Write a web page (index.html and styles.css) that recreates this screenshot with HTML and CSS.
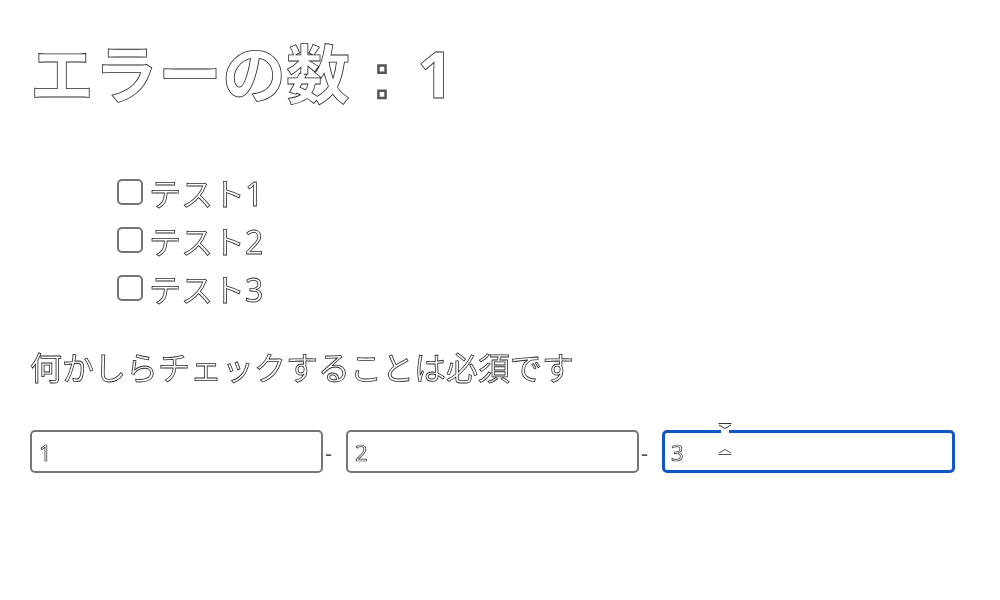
FILE: index.html
```html
<!DOCTYPE html>
<html lang="ja">
<head>
<meta charset="utf-8">
<title>エラーの数</title>
<link rel="stylesheet" href="styles.css">
</head>
<body>
<main class="page">
  <h1 class="title">エラーの数<span class="colon">：</span>1</h1>
  <ul class="checks">
    <li class="check-row"><input type="checkbox" class="box" id="t1"><label class="lbl" for="t1">テスト1</label></li>
    <li class="check-row"><input type="checkbox" class="box" id="t2"><label class="lbl" for="t2">テスト2</label></li>
    <li class="check-row"><input type="checkbox" class="box" id="t3"><label class="lbl" for="t3">テスト3</label></li>
  </ul>
  <p class="msg">何かしらチェックすることは必須です</p>
  <div class="fields">
    <input class="field" type="text" value="1">
    <span class="sep">-</span>
    <input class="field" type="text" value="2">
    <span class="sep">-</span>
    <div class="field-wrap">
      <input class="field field-focus" type="text" value="3">
      <svg class="ibeam" width="16" height="34" viewBox="0 0 16 34" aria-hidden="true">
        <rect x="4" y="4" width="8" height="26" fill="#fff"/>
        <path d="M1.5 1.5 H14.5 M2 3 L8 6.5 L14 3" fill="none" stroke="#333" stroke-width="1"/>
        <path d="M2 31 L8 27.5 L14 31 M1.5 32.5 H14.5" fill="none" stroke="#555" stroke-width="1"/>
      </svg>
    </div>
  </div>
</main>
</body>
</html>
```

FILE: styles.css
```css
html, body {
  margin: 0;
  padding: 0;
  background: #fff;
}

body {
  font-family: "Noto Sans", "Noto Sans CJK JP", sans-serif;
  color: #fff;
  -webkit-text-stroke: 0.8px #2a2a2a;
}

.page {
  padding: 28px 0 0 30px;
  display: flex;
  flex-direction: column;
  will-change: transform;
}

.title {
  margin: 0;
  font-size: 64px;
  font-weight: 700;
  line-height: 92px;
}

.colon {
  font-family: "Noto Sans", sans-serif;
  -webkit-text-stroke: 0.5px #555;
  margin-right: 3px;
}

.checks {
  list-style: none;
  margin: 48px 0 0 0;
  padding: 0 0 0 87px;
  display: flex;
  flex-direction: column;
}

.check-row {
  display: flex;
  align-items: center;
  height: 48px;
  font-size: 32px;
  line-height: 48px;
}

.lbl {
  margin-top: 3px;
}

.box {
  -webkit-appearance: none;
  appearance: none;
  width: 26px;
  height: 26px;
  margin: 0 6px 0 0;
  border: 2px solid #767676;
  border-radius: 5px;
  background: #fff;
  box-sizing: border-box;
}

.msg {
  margin: 32px 0 0 0;
  font-size: 32px;
  line-height: 48px;
}

.fields {
  margin-top: 38px;
  display: flex;
  align-items: center;
}

.field {
  width: 293px;
  height: 43px;
  box-sizing: border-box;
  border: 2px solid #767676;
  border-radius: 5px;
  padding: 2px 7px;
  font-family: "Noto Sans", "Noto Sans CJK JP", sans-serif;
  font-size: 22px;
  color: #fff;
  -webkit-text-stroke: 0.7px #2a2a2a;
  background: #fff;
  outline: none;
  margin: 0;
}

.field-focus {
  border: 3px solid #1156c6;
  padding: 1px 6px;
}

.sep {
  width: 23px;
  box-sizing: border-box;
  padding-left: 2px;
  font-size: 22px;
  line-height: 42px;
  color: #555;
  -webkit-text-stroke: 0;
}

.field-wrap {
  position: relative;
  display: flex;
}

.ibeam {
  position: absolute;
  left: 55px;
  top: -8px;
}
```
